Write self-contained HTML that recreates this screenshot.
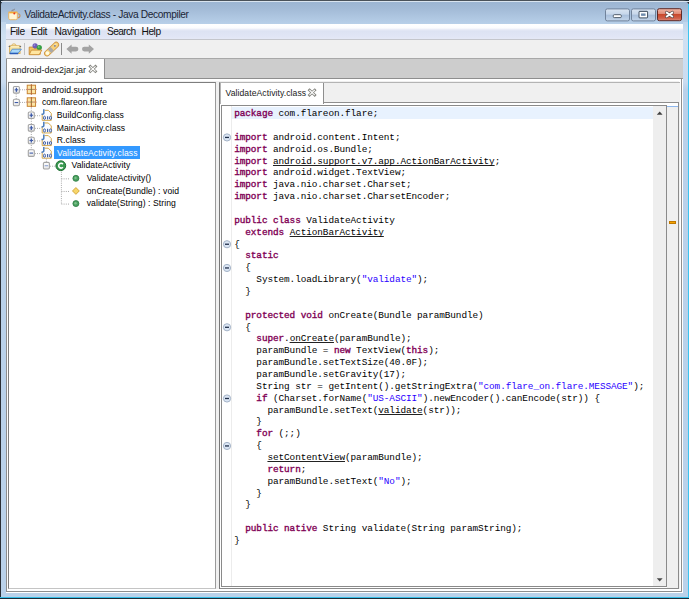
<!DOCTYPE html>
<html><head><meta charset="utf-8">
<style>
*{margin:0;padding:0;box-sizing:border-box}
html,body{width:689px;height:599px;overflow:hidden;background:#1d2b36}
body{position:relative;font-family:"Liberation Sans",sans-serif}
.a{position:absolute}
svg.a{overflow:visible}
#frame{left:0;top:0;width:689px;height:598px;background:linear-gradient(#9db6d3 2px,#a3bbd7 8px,#b9d1ea 24px,#bad2ea);border-left:1px solid #2a2f36;border-top:1px solid #4a525a;border-radius:5px 6px 0 0}
#frame:after{content:"";position:absolute;left:0;top:0;right:0;height:1px;background:#d9e4ef}
#cyanR{left:688px;top:4px;width:1px;height:594px;background:#3cc3ef}
#cyanB{left:0;top:597px;width:689px;height:1px;background:#36bfe8}
#title{left:24.5px;top:8.8px;font-size:10.2px;letter-spacing:-0.36px;line-height:12px;color:#1b2536;white-space:pre}
#menubar{left:6px;top:24px;width:677px;height:16px;background:linear-gradient(#ffffff 0px,#fbfcfe 4px,#e9ecf7 5.5px,#dde3f3 7px,#e0e5f5 12px,#e4e8f6 14.5px);border-bottom:1px solid #c4c6cc}
.mi{top:26px;font-size:10.2px;line-height:12px;color:#111;white-space:pre}
#toolbar{left:6px;top:40px;width:677px;height:18px;background:#f0f0f0}
#tline{left:6px;top:58px;width:677px;height:1px;background:#a8a8a8}
#strip{left:6px;top:59px;width:677px;height:20px;background:#cdcdcd;border-bottom:1px solid #9a9a9a}
#client{left:6px;top:24px;width:677px;height:569px;background:#fff}
#outer{left:6px;top:78px;width:676px;height:514px;background:#f0f0f0;border:1px solid #8e8e8e}
#outerw{left:7px;top:79px;width:674px;height:512px;border:2px solid #fff;border-left:1px solid #fff}
#tab1{left:6px;top:59px;width:99px;height:22px;background:#fff;border-left:1px solid #8e8e8e}
#tab1r{left:104px;top:59px;width:1px;height:20px;background:#8e8e8e}
#tab1t{left:11.5px;top:63.5px;font-size:9px;line-height:12px;color:#1a1a1a;white-space:pre}
#tree{left:8px;top:82px;width:208px;height:507px;background:#fff;border:1px solid #7e7e7e;border-right:1px solid #9a9a9a;border-bottom:1px solid #c4c4c4}
#rp{left:219px;top:82px;width:461px;height:507px;background:#f0f0f0;border-left:1px solid #787878;border-top:1px solid #b4b4b4}
#content{left:220px;top:102px;width:459px;height:487px;background:#fff;border:1px solid #8a8a8a;border-left:0;border-top:1px solid #8e8e8e}
#tab2{left:220px;top:83px;width:104px;height:21px;background:#fff;border-left:1px solid #b4b4b4;border-right:1px solid #8e8e8e}
#tab2t{left:225.5px;top:86.5px;font-size:8.6px;letter-spacing:0.08px;line-height:12px;color:#1a1a1a;white-space:pre}
#editor{left:221px;top:105px;width:446px;height:482px;background:#fff;border-left:1px solid #8a8a8a;border-top:1px solid #8a8a8a;border-bottom:1px solid #8a8a8a}
#gutter{left:231px;top:106px;width:1px;height:480px;background:#ececec}
#hl{left:232px;top:106.8px;width:421px;height:12.4px;background:#e8f2fe}
#vscroll{left:653px;top:106px;width:14px;height:480px;background:#eeeeee;border-right:1px solid #8a8a8a}
#ruler{left:667px;top:106px;width:11px;height:482px;background:#efefef}
#rulertop{left:667px;top:105.5px;width:11px;height:1.2px;background:#8fb8ee}
.mono{font-family:"Liberation Mono",monospace;font-size:9.4px;letter-spacing:-0.085px;white-space:pre;color:#000}
#code{left:234.2px;top:108.1px;line-height:11.866px}
.k{color:#7f0055;font-weight:normal;-webkit-text-stroke:0.35px #7f0055}
.s{color:#2a00ff}
.u{text-decoration:underline;text-decoration-color:#222;text-underline-offset:1px;text-decoration-skip-ink:none}
.tt{font-size:8.6px;letter-spacing:0.07px;line-height:12px;color:#000;white-space:pre}
.sel{background:#3399ff}
</style></head><body>
<div id="frame" class="a"></div><div id="cyanR" class="a"></div><div id="cyanB" class="a"></div>
<div class="a" style="left:1px;top:22px;width:5px;height:68px;background:linear-gradient(#bfd5ec,#cfe0f2 20%,#cadcf0 88%,#b9d1ea)"></div>
<div class="a" style="left:683px;top:22px;width:5px;height:68px;background:linear-gradient(#bfd5ec,#cfe0f2 20%,#cadcf0 88%,#b9d1ea)"></div>
<div id="title" class="a">ValidateActivity.class - Java Decompiler</div>
<div id="client" class="a"></div><div id="menubar" class="a"></div>
<div class="a mi" style="left:10px;letter-spacing:-0.45px">File</div>
<div class="a mi" style="left:30.8px;letter-spacing:-0.3px">Edit</div>
<div class="a mi" style="left:54.5px;letter-spacing:-0.24px">Navigation</div>
<div class="a mi" style="left:107px;letter-spacing:-0.6px">Search</div>
<div class="a mi" style="left:141.5px;letter-spacing:-0.45px">Help</div>
<div id="toolbar" class="a"></div><div id="tline" class="a"></div><div id="strip" class="a"></div><div id="outer" class="a"></div><div id="outerw" class="a"></div>
<div class="a" style="left:24.3px;top:43px;width:1.2px;height:12px;background:#c0c0c0"></div>
<div class="a" style="left:61px;top:43.2px;width:1.2px;height:12.2px;background:#8a8a8a"></div>
<div id="tab1" class="a"></div><div id="tab1r" class="a"></div><div id="tab1t" class="a">android-dex2jar.jar</div>
<div id="tree" class="a"></div><div id="rp" class="a"></div><div id="content" class="a"></div>
<div id="tab2" class="a"></div><div id="tab2t" class="a">ValidateActivity.class</div>
<div id="editor" class="a"></div><div id="gutter" class="a"></div><div id="hl" class="a"></div>
<div id="vscroll" class="a"></div><div id="ruler" class="a"></div><div id="rulertop" class="a"></div>
<div class="a" style="left:669px;top:221px;width:7.4px;height:3.2px;background:#f5a300;border:0.6px solid #c07800"></div>
<div id="code" class="a mono"><span class="k">package</span> com.flareon.flare;

<span class="k">import</span> android.content.Intent;
<span class="k">import</span> android.os.Bundle;
<span class="k">import</span> <span class="u">android.support.v7.app.ActionBarActivity</span>;
<span class="k">import</span> android.widget.TextView;
<span class="k">import</span> java.nio.charset.Charset;
<span class="k">import</span> java.nio.charset.CharsetEncoder;

<span class="k">public</span> <span class="k">class</span> ValidateActivity
  <span class="k">extends</span> <span class="u">ActionBarActivity</span>
{
  <span class="k">static</span>
  {
    System.loadLibrary(<span class="s">"validate"</span>);
  }

  <span class="k">protected</span> <span class="k">void</span> onCreate(Bundle paramBundle)
  {
    <span class="k">super</span>.<span class="u">onCreate</span>(paramBundle);
    paramBundle = <span class="k">new</span> TextView(<span class="k">this</span>);
    paramBundle.setTextSize(40.0F);
    paramBundle.setGravity(17);
    String str = getIntent().getStringExtra(<span class="s">"com.flare_on.flare.MESSAGE"</span>);
    <span class="k">if</span> (Charset.forName(<span class="s">"US-ASCII"</span>).newEncoder().canEncode(str)) {
      paramBundle.setText(<span class="u">validate</span>(str));
    }
    <span class="k">for</span> (;;)
    {
      <span class="u">setContentView</span>(paramBundle);
      <span class="k">return</span>;
      paramBundle.setText(<span class="s">"No"</span>);
    }
  }

  <span class="k">public</span> <span class="k">native</span> String validate(String paramString);
}</div>
<div class="a sel" style="left:54px;top:146.2px;width:86px;height:12.5px"></div>
<div class="a tt" style="left:41.9px;top:83.70px">android.support</div>
<div class="a tt" style="left:41.9px;top:96.32px">com.flareon.flare</div>
<div class="a tt" style="left:56.8px;top:108.94px">BuildConfig.class</div>
<div class="a tt" style="left:56.8px;top:121.56px">MainActivity.class</div>
<div class="a tt" style="left:56.8px;top:134.18px">R.class</div>
<div class="a tt" style="left:57px;top:146.80px;color:#fff">ValidateActivity.class</div>
<div class="a tt" style="left:71.5px;top:159.42px">ValidateActivity</div>
<div class="a tt" style="left:86.7px;top:172.04px">ValidateActivity()</div>
<div class="a tt" style="left:86.7px;top:184.66px">onCreate(Bundle) : void</div>
<div class="a tt" style="left:86.7px;top:197.28px">validate(String) : String</div>
<svg class="a" style="left:0;top:0" width="689" height="599" viewBox="0 0 689 599"><g transform="translate(6 7)">
<path d="M6 4.6 Q5.5 3.5 7 3.1 Q8.6 2.7 8.6 1.7" stroke="#8c9098" stroke-width="1.1" fill="none"/>
<path d="M11.3 6.8 q2.7 -0.3 2.7 1.9 q0 2 -2.7 2" stroke="#c8905a" stroke-width="1.1" fill="none"/>
<path d="M2.7 4.9 H11.3 V11.2 Q11.3 12.7 9.8 12.7 H4.2 Q2.7 12.7 2.7 11.2z" fill="#fff6d6" stroke="#e6b060" stroke-width=".9"/>
<path d="M3.3 5.7 h7.4" stroke="#f2a830" stroke-width="1.3"/>
<circle cx="8.3" cy="6.4" r="1" fill="#e83a20"/>
</g><g transform="translate(605 8.4)"><defs><linearGradient id="gb" x1="0" y1="0" x2="0" y2="1"><stop offset="0" stop-color="#dae5f2"/><stop offset=".45" stop-color="#c6d6ea"/><stop offset=".5" stop-color="#a8bfdb"/><stop offset="1" stop-color="#c3d5ea"/></linearGradient></defs><rect x=".5" y=".5" width="24" height="12" rx="1.8" fill="url(#gb)" stroke="#71839b"/><rect x="8.3" y="6.3" width="8" height="2.9" rx="1" fill="#fff" stroke="#44505e" stroke-width=".9"/></g><g transform="translate(631 8.4)"><defs><linearGradient id="gb2" x1="0" y1="0" x2="0" y2="1"><stop offset="0" stop-color="#dae5f2"/><stop offset=".45" stop-color="#c6d6ea"/><stop offset=".5" stop-color="#a8bfdb"/><stop offset="1" stop-color="#c3d5ea"/></linearGradient></defs><rect x=".5" y=".5" width="24" height="12" rx="1.8" fill="url(#gb2)" stroke="#71839b"/><rect x="8" y="2.9" width="8.6" height="6.6" rx=".8" fill="#5b6e86" stroke="#3a4654" stroke-width=".9"/><rect x="9.3" y="4.3" width="6" height="3.9" fill="#6d8aac" stroke="#fff" stroke-width="1.5"/></g><g transform="translate(657 8.2)"><defs><linearGradient id="gr" x1="0" y1="0" x2="0" y2="1"><stop offset="0" stop-color="#f2b8a8"/><stop offset=".42" stop-color="#e08c78"/><stop offset=".45" stop-color="#c84528"/><stop offset=".8" stop-color="#d0604a"/><stop offset="1" stop-color="#e09080"/></linearGradient></defs><rect x=".5" y=".5" width="24" height="12" rx="1.8" fill="url(#gr)" stroke="#5e2a28"/><path d="M9.7 4.4 L15.3 8.3 M15.3 4.4 L9.7 8.3" stroke="#5a4a4a" stroke-width="3.3" stroke-linecap="round"/><path d="M9.7 4.4 L15.3 8.3 M15.3 4.4 L9.7 8.3" stroke="#fff" stroke-width="1.9" stroke-linecap="round"/></g><g transform="translate(8 43)">
<path d="M3.6 2.8 Q3.8 0.8 5.9 0.8 Q8 0.8 8.2 2.8" fill="#fbeec0" stroke="#d8b060" stroke-width=".9"/>
<rect x="1.5" y="2.8" width="10.6" height="7.6" fill="#f7df98" stroke="#d4a850" stroke-width=".8"/>
<path d="M2.5 3.8 h9" stroke="#fff4c8" stroke-width="1.2"/>
<path d="M0.7 3.5 h1.6 M11.5 3.5 h1.6" stroke="#6a6a6a" stroke-width="1"/>
<path d="M4.2 6.2 H13.4 L10.2 10 H1.9z" fill="#a8d8fa" stroke="#4a88d0" stroke-width=".8"/>
<path d="M1.6 10.6 H10.2" stroke="#2a5cb8" stroke-width="1.3"/>
</g><g transform="translate(28 42.5)">
<path d="M1.2 4.6 h4 l1 1 h6 v6.3 h-11z" fill="#f0c466" stroke="#c98a34" stroke-width=".9"/>
<circle cx="7.1" cy="3.3" r="2.6" fill="#6e5cb8"/>
<circle cx="6.4" cy="2.6" r=".9" fill="#9a8ad8"/>
<circle cx="11.3" cy="5.1" r="2.6" fill="#34a044"/>
<circle cx="10.7" cy="4.4" r=".9" fill="#7ccc80"/>
<path d="M3.4 7.6 h10.4 l-2.6 4.6 h-10z" fill="#ffe6a0" stroke="#cc8e36" stroke-width=".9"/>
</g><g transform="translate(44.5 42.5)">
<path d="M2.6 10.9 L11.6 2.3" stroke="#cf9440" stroke-width="6" stroke-linecap="round"/>
<path d="M2.6 10.9 L11.6 2.3" stroke="#f6d07a" stroke-width="4.4" stroke-linecap="round"/>
<path d="M9.5 2.8 L12 1.5" stroke="#fbe6a8" stroke-width="1.2"/>
<path d="M5 8.6 L7.6 6.1" stroke="#a9a9a9" stroke-width="5"/>
<circle cx="2.9" cy="10.6" r="1.9" fill="#fffbe0"/>
<circle cx="10.4" cy="3.4" r=".8" fill="#5a6aa8"/>
</g><g transform="translate(66 44.4)"><path d="M0.4 4.6 L5.6 0 V2.3 H10 a2.3 2.3 0 0 1 0 4.8 H5.6 V9.3z" fill="#a3a3a3"/></g><g transform="translate(82 44.4)"><path d="M12 4.6 L6.8 0 V2.3 H2.4 a2.3 2.3 0 0 0 0 4.8 H6.8 V9.3z" fill="#a3a3a3"/></g><g transform="translate(88.6 64.9)"><path d="M1.7 1.6 L6.9 6.5 M6.9 1.6 L1.7 6.5" stroke="#84847e" stroke-width="2.7" stroke-linecap="square"/><path d="M1.6 1.5 L7 6.6 M7 1.5 L1.6 6.6" stroke="#ffffff" stroke-width="1.1" stroke-linecap="butt"/></g><g transform="translate(307.8 88.5)"><path d="M1.7 1.6 L6.9 6.5 M6.9 1.6 L1.7 6.5" stroke="#84847e" stroke-width="2.7" stroke-linecap="square"/><path d="M1.6 1.5 L7 6.6 M7 1.5 L1.6 6.6" stroke="#ffffff" stroke-width="1.1" stroke-linecap="butt"/></g><g transform="translate(656 111)"><path d="M0.8 3.8 L3.7 0.6 L6.6 3.8z" fill="#404040"/></g><g transform="translate(656 577.6)"><path d="M0.8 0.6 L3.7 3.8 L6.6 0.6z" fill="#484848"/></g><g transform="translate(222 132.93)"><circle cx="5" cy="4.5" r="3.6" fill="#dbe6f5" stroke="#a5b4c8" stroke-width="1"/><path d="M3 4.5 h4" stroke="#1e2d48" stroke-width="1.3"/></g><g transform="translate(222 239.73)"><circle cx="5" cy="4.5" r="3.6" fill="#dbe6f5" stroke="#a5b4c8" stroke-width="1"/><path d="M3 4.5 h4" stroke="#1e2d48" stroke-width="1.3"/></g><g transform="translate(222 263.46)"><circle cx="5" cy="4.5" r="3.6" fill="#dbe6f5" stroke="#a5b4c8" stroke-width="1"/><path d="M3 4.5 h4" stroke="#1e2d48" stroke-width="1.3"/></g><g transform="translate(222 322.79)"><circle cx="5" cy="4.5" r="3.6" fill="#dbe6f5" stroke="#a5b4c8" stroke-width="1"/><path d="M3 4.5 h4" stroke="#1e2d48" stroke-width="1.3"/></g><g transform="translate(222 393.98)"><circle cx="5" cy="4.5" r="3.6" fill="#dbe6f5" stroke="#a5b4c8" stroke-width="1"/><path d="M3 4.5 h4" stroke="#1e2d48" stroke-width="1.3"/></g><g transform="translate(222 441.45)"><circle cx="5" cy="4.5" r="3.6" fill="#dbe6f5" stroke="#a5b4c8" stroke-width="1"/><path d="M3 4.5 h4" stroke="#1e2d48" stroke-width="1.3"/></g><path d="M16.2 93.6 L16.2 99.02000000000001" stroke="#a8a8a8" stroke-width="1" stroke-dasharray="1 1.2"/><path d="M19.8 89.8 L26.5 89.8" stroke="#a8a8a8" stroke-width="1" stroke-dasharray="1 1.2"/><path d="M19.8 102.42 L26.5 102.42" stroke="#a8a8a8" stroke-width="1" stroke-dasharray="1 1.2"/><g transform="translate(12.85 85.95)"><defs><linearGradient id="eg" x1="0" y1="0" x2="0" y2="1"><stop offset="0" stop-color="#ffffff"/><stop offset="1" stop-color="#e6e6e6"/></linearGradient></defs><rect x="0.55" y="0.55" width="6" height="6.6" rx="1.2" fill="url(#eg)" stroke="#a4a4a4" stroke-width="1.1"/><path d="M1.8 3.85 h3.5" stroke="#3d5aa8" stroke-width="1.1"/><path d="M3.55 1.8 v4.1" stroke="#3d5aa8" stroke-width="1.3"/></g><g transform="translate(12.85 98.67)"><defs><linearGradient id="eg" x1="0" y1="0" x2="0" y2="1"><stop offset="0" stop-color="#ffffff"/><stop offset="1" stop-color="#e6e6e6"/></linearGradient></defs><rect x="0.55" y="0.55" width="6" height="6.6" rx="1.2" fill="url(#eg)" stroke="#a4a4a4" stroke-width="1.1"/><path d="M1.8 3.85 h3.5" stroke="#3d5aa8" stroke-width="1.1"/></g><g transform="translate(25.85 84.1)"><rect x="1.4" y="1.1" width="8.3" height="8.5" fill="#fbe6a6" stroke="#c98432" stroke-width="1"/><path d="M5.55 0.2 V10.6" stroke="#b46a36" stroke-width="1.1"/><path d="M0.3 5.35 H10.8" stroke="#c88a6a" stroke-width="1.1"/><circle cx="5.55" cy="5.35" r=".7" fill="#6a8a3a"/></g><g transform="translate(25.85 96.72)"><rect x="1.4" y="1.1" width="8.3" height="8.5" fill="#fbe6a6" stroke="#c98432" stroke-width="1"/><path d="M5.55 0.2 V10.6" stroke="#b46a36" stroke-width="1.1"/><path d="M0.3 5.35 H10.8" stroke="#c88a6a" stroke-width="1.1"/><circle cx="5.55" cy="5.35" r=".7" fill="#6a8a3a"/></g><path d="M31.3 107.62 L31.3 149.5" stroke="#a8a8a8" stroke-width="1" stroke-dasharray="1 1.2"/><path d="M34.8 115.74 L41 115.74" stroke="#a8a8a8" stroke-width="1" stroke-dasharray="1 1.2"/><g transform="translate(27.75 111.39)"><defs><linearGradient id="eg" x1="0" y1="0" x2="0" y2="1"><stop offset="0" stop-color="#ffffff"/><stop offset="1" stop-color="#e6e6e6"/></linearGradient></defs><rect x="0.55" y="0.55" width="6" height="6.6" rx="1.2" fill="url(#eg)" stroke="#a4a4a4" stroke-width="1.1"/><path d="M1.8 3.85 h3.5" stroke="#3d5aa8" stroke-width="1.1"/><path d="M3.55 1.8 v4.1" stroke="#3d5aa8" stroke-width="1.3"/></g><g transform="translate(41 109.74)"><path d="M1.2 4.6 V10.6 H10.3 V3.6 L7.3 0.6 H3.6" fill="#fbfcff" stroke="#d2a444" stroke-width="0.95"/><path d="M2.8 -0.6 V3.2 Q2.8 4.6 0.5 4.6" stroke="#4a7cbc" stroke-width="1.5" fill="none"/><ellipse cx="3.5" cy="8.1" rx="1.05" ry="1.6" fill="#dfe6f4" stroke="#4664a6" stroke-width="1"/><path d="M6.6 6.5 V9.7" stroke="#4664a6" stroke-width="1.2"/><ellipse cx="9.5" cy="8.1" rx="1.05" ry="1.6" fill="#dfe6f4" stroke="#4664a6" stroke-width="1"/></g><path d="M34.8 128.36 L41 128.36" stroke="#a8a8a8" stroke-width="1" stroke-dasharray="1 1.2"/><g transform="translate(27.75 124.01)"><defs><linearGradient id="eg" x1="0" y1="0" x2="0" y2="1"><stop offset="0" stop-color="#ffffff"/><stop offset="1" stop-color="#e6e6e6"/></linearGradient></defs><rect x="0.55" y="0.55" width="6" height="6.6" rx="1.2" fill="url(#eg)" stroke="#a4a4a4" stroke-width="1.1"/><path d="M1.8 3.85 h3.5" stroke="#3d5aa8" stroke-width="1.1"/><path d="M3.55 1.8 v4.1" stroke="#3d5aa8" stroke-width="1.3"/></g><g transform="translate(41 122.36)"><path d="M1.2 4.6 V10.6 H10.3 V3.6 L7.3 0.6 H3.6" fill="#fbfcff" stroke="#d2a444" stroke-width="0.95"/><path d="M2.8 -0.6 V3.2 Q2.8 4.6 0.5 4.6" stroke="#4a7cbc" stroke-width="1.5" fill="none"/><ellipse cx="3.5" cy="8.1" rx="1.05" ry="1.6" fill="#dfe6f4" stroke="#4664a6" stroke-width="1"/><path d="M6.6 6.5 V9.7" stroke="#4664a6" stroke-width="1.2"/><ellipse cx="9.5" cy="8.1" rx="1.05" ry="1.6" fill="#dfe6f4" stroke="#4664a6" stroke-width="1"/></g><path d="M34.8 140.98 L41 140.98" stroke="#a8a8a8" stroke-width="1" stroke-dasharray="1 1.2"/><g transform="translate(27.75 136.63)"><defs><linearGradient id="eg" x1="0" y1="0" x2="0" y2="1"><stop offset="0" stop-color="#ffffff"/><stop offset="1" stop-color="#e6e6e6"/></linearGradient></defs><rect x="0.55" y="0.55" width="6" height="6.6" rx="1.2" fill="url(#eg)" stroke="#a4a4a4" stroke-width="1.1"/><path d="M1.8 3.85 h3.5" stroke="#3d5aa8" stroke-width="1.1"/><path d="M3.55 1.8 v4.1" stroke="#3d5aa8" stroke-width="1.3"/></g><g transform="translate(41 134.98)"><path d="M1.2 4.6 V10.6 H10.3 V3.6 L7.3 0.6 H3.6" fill="#fbfcff" stroke="#d2a444" stroke-width="0.95"/><path d="M2.8 -0.6 V3.2 Q2.8 4.6 0.5 4.6" stroke="#4a7cbc" stroke-width="1.5" fill="none"/><ellipse cx="3.5" cy="8.1" rx="1.05" ry="1.6" fill="#dfe6f4" stroke="#4664a6" stroke-width="1"/><path d="M6.6 6.5 V9.7" stroke="#4664a6" stroke-width="1.2"/><ellipse cx="9.5" cy="8.1" rx="1.05" ry="1.6" fill="#dfe6f4" stroke="#4664a6" stroke-width="1"/></g><path d="M34.8 153.6 L41 153.6" stroke="#a8a8a8" stroke-width="1" stroke-dasharray="1 1.2"/><g transform="translate(27.75 149.25)"><defs><linearGradient id="eg" x1="0" y1="0" x2="0" y2="1"><stop offset="0" stop-color="#ffffff"/><stop offset="1" stop-color="#e6e6e6"/></linearGradient></defs><rect x="0.55" y="0.55" width="6" height="6.6" rx="1.2" fill="url(#eg)" stroke="#a4a4a4" stroke-width="1.1"/><path d="M1.8 3.85 h3.5" stroke="#3d5aa8" stroke-width="1.1"/></g><g transform="translate(41 147.6)"><path d="M1.2 4.6 V10.6 H10.3 V3.6 L7.3 0.6 H3.6" fill="#fbfcff" stroke="#d2a444" stroke-width="0.95"/><path d="M2.8 -0.6 V3.2 Q2.8 4.6 0.5 4.6" stroke="#4a7cbc" stroke-width="1.5" fill="none"/><ellipse cx="3.5" cy="8.1" rx="1.05" ry="1.6" fill="#dfe6f4" stroke="#4664a6" stroke-width="1"/><path d="M6.6 6.5 V9.7" stroke="#4664a6" stroke-width="1.2"/><ellipse cx="9.5" cy="8.1" rx="1.05" ry="1.6" fill="#dfe6f4" stroke="#4664a6" stroke-width="1"/></g><path d="M46.4 158.6 L46.4 162.12" stroke="#a8a8a8" stroke-width="1" stroke-dasharray="1 1.2"/><path d="M49.9 166.22 L55.3 166.22" stroke="#a8a8a8" stroke-width="1" stroke-dasharray="1 1.2"/><g transform="translate(42.85 161.87)"><defs><linearGradient id="eg" x1="0" y1="0" x2="0" y2="1"><stop offset="0" stop-color="#ffffff"/><stop offset="1" stop-color="#e6e6e6"/></linearGradient></defs><rect x="0.55" y="0.55" width="6" height="6.6" rx="1.2" fill="url(#eg)" stroke="#a4a4a4" stroke-width="1.1"/><path d="M1.8 3.85 h3.5" stroke="#8ea4d4" stroke-width="1.1"/></g><g transform="translate(55.3 160.22)"><circle cx="5.5" cy="5.5" r="4.9" fill="#3a9a50" stroke="#1f6e34" stroke-width="1"/><path d="M7.6 3.9 A2.4 2.4 0 1 0 7.6 7.1" stroke="#fff" stroke-width="1.6" fill="none"/></g><path d="M61.4 171.72 L61.4 204.07999999999998" stroke="#a8a8a8" stroke-width="1" stroke-dasharray="1 1.2"/><path d="M61.4 178.83999999999997 L69.5 178.83999999999997" stroke="#a8a8a8" stroke-width="1" stroke-dasharray="1 1.2"/><path d="M61.4 191.45999999999998 L69.5 191.45999999999998" stroke="#a8a8a8" stroke-width="1" stroke-dasharray="1 1.2"/><path d="M61.4 204.07999999999998 L69.5 204.07999999999998" stroke="#a8a8a8" stroke-width="1" stroke-dasharray="1 1.2"/><g transform="translate(71.9 174.34)"><circle cx="4" cy="4" r="3" fill="#4aa060" stroke="#2a7a40" stroke-width=".8"/><circle cx="3.6" cy="3.6" r="1.2" fill="#7cc08a"/></g><g transform="translate(71.9 186.96)"><path d="M4 0.6 L7.4 4 L4 7.4 L0.6 4z" fill="#f7d66a" stroke="#d0a030" stroke-width=".9"/></g><g transform="translate(71.9 199.58)"><circle cx="4" cy="4" r="3" fill="#4aa060" stroke="#2a7a40" stroke-width=".8"/><circle cx="3.6" cy="3.6" r="1.2" fill="#7cc08a"/></g></svg>
</body></html>
